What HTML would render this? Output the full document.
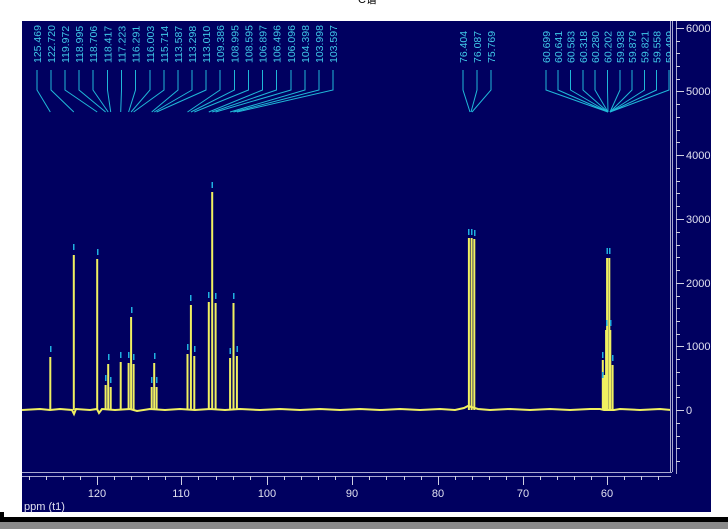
<!DOCTYPE html>
<html><head><meta charset="utf-8"><style>
html,body{margin:0;padding:0;background:#fff;width:728px;height:529px;overflow:hidden}
svg{display:block}
text{font-family:"Liberation Sans","Noto Sans CJK SC",sans-serif}
</style></head><body>
<svg width="728" height="529" viewBox="0 0 728 529" xmlns="http://www.w3.org/2000/svg">
<defs><clipPath id="c"><rect x="22" y="21" width="648" height="100"/></clipPath></defs>
<rect width="728" height="529" fill="#fff"/>
<text x="358" y="3" font-size="11" fill="#000">C谱</text>
<rect x="22" y="21" width="689" height="491" fill="#000060"/>
<rect x="0" y="517" width="728" height="5" fill="#000"/>
<rect x="0" y="522" width="728" height="7" fill="#8a8a8a"/>
<rect x="0" y="512" width="4" height="10" fill="#000"/>
<g stroke="#a8a8d0" fill="none" stroke-width="1">
<line x1="22" y1="472.5" x2="672" y2="472.5"/>
<line x1="676.5" y1="21" x2="676.5" y2="474"/>
<line x1="22" y1="476.5" x2="671" y2="476.5"/>
</g>
<g stroke="#d0d0e0" stroke-width="1">
<line x1="676" y1="28.5" x2="684" y2="28.5"/><line x1="676" y1="91.5" x2="684" y2="91.5"/>
<line x1="676" y1="155.5" x2="684" y2="155.5"/><line x1="676" y1="219.5" x2="684" y2="219.5"/>
<line x1="676" y1="283.5" x2="684" y2="283.5"/><line x1="676" y1="346.5" x2="684" y2="346.5"/>
<line x1="676" y1="410.5" x2="684" y2="410.5"/>
<line x1="676" y1="41.5" x2="680" y2="41.5"/><line x1="676" y1="53.5" x2="680" y2="53.5"/><line x1="676" y1="66.5" x2="680" y2="66.5"/><line x1="676" y1="79.5" x2="680" y2="79.5"/>
<line x1="676" y1="104.5" x2="680" y2="104.5"/><line x1="676" y1="117.5" x2="680" y2="117.5"/><line x1="676" y1="130.5" x2="680" y2="130.5"/><line x1="676" y1="142.5" x2="680" y2="142.5"/>
<line x1="676" y1="168.5" x2="680" y2="168.5"/><line x1="676" y1="181.5" x2="680" y2="181.5"/><line x1="676" y1="193.5" x2="680" y2="193.5"/><line x1="676" y1="206.5" x2="680" y2="206.5"/>
<line x1="676" y1="232.5" x2="680" y2="232.5"/><line x1="676" y1="245.5" x2="680" y2="245.5"/><line x1="676" y1="257.5" x2="680" y2="257.5"/><line x1="676" y1="270.5" x2="680" y2="270.5"/>
<line x1="676" y1="296.5" x2="680" y2="296.5"/><line x1="676" y1="308.5" x2="680" y2="308.5"/><line x1="676" y1="321.5" x2="680" y2="321.5"/><line x1="676" y1="334.5" x2="680" y2="334.5"/>
<line x1="676" y1="359.5" x2="680" y2="359.5"/><line x1="676" y1="372.5" x2="680" y2="372.5"/><line x1="676" y1="385.5" x2="680" y2="385.5"/><line x1="676" y1="397.5" x2="680" y2="397.5"/>
<line x1="676" y1="423.5" x2="680" y2="423.5"/><line x1="676" y1="436.5" x2="680" y2="436.5"/><line x1="676" y1="448.5" x2="680" y2="448.5"/><line x1="676" y1="461.5" x2="680" y2="461.5"/>
</g>
<g fill="#e0e0f0" font-size="11">
<text x="686" y="32">6000</text><text x="686" y="95">5000</text><text x="686" y="159">4000</text>
<text x="686" y="223">3000</text><text x="686" y="287">2000</text><text x="686" y="350">1000</text>
<text x="686" y="414">0</text>
</g>
<g stroke="#d0d0e0" stroke-width="1">
<line x1="97.5" y1="476" x2="97.5" y2="485"/><line x1="181.5" y1="476" x2="181.5" y2="485"/><line x1="267.5" y1="476" x2="267.5" y2="485"/><line x1="352.5" y1="476" x2="352.5" y2="485"/><line x1="438.5" y1="476" x2="438.5" y2="485"/><line x1="523.5" y1="476" x2="523.5" y2="485"/><line x1="607.5" y1="476" x2="607.5" y2="485"/>
<line x1="29.5" y1="476" x2="29.5" y2="480"/><line x1="46.5" y1="476" x2="46.5" y2="480"/><line x1="63.5" y1="476" x2="63.5" y2="480"/><line x1="80.5" y1="476" x2="80.5" y2="480"/>
<line x1="114.5" y1="476" x2="114.5" y2="480"/><line x1="131.5" y1="476" x2="131.5" y2="480"/><line x1="148.5" y1="476" x2="148.5" y2="480"/><line x1="165.5" y1="476" x2="165.5" y2="480"/>
<line x1="198.5" y1="476" x2="198.5" y2="480"/><line x1="216.5" y1="476" x2="216.5" y2="480"/><line x1="233.5" y1="476" x2="233.5" y2="480"/><line x1="250.5" y1="476" x2="250.5" y2="480"/>
<line x1="284.5" y1="476" x2="284.5" y2="480"/><line x1="301.5" y1="476" x2="301.5" y2="480"/><line x1="318.5" y1="476" x2="318.5" y2="480"/><line x1="335.5" y1="476" x2="335.5" y2="480"/>
<line x1="369.5" y1="476" x2="369.5" y2="480"/><line x1="386.5" y1="476" x2="386.5" y2="480"/><line x1="404.5" y1="476" x2="404.5" y2="480"/><line x1="421.5" y1="476" x2="421.5" y2="480"/>
<line x1="455.5" y1="476" x2="455.5" y2="480"/><line x1="472.5" y1="476" x2="472.5" y2="480"/><line x1="489.5" y1="476" x2="489.5" y2="480"/><line x1="506.5" y1="476" x2="506.5" y2="480"/>
<line x1="540.5" y1="476" x2="540.5" y2="480"/><line x1="557.5" y1="476" x2="557.5" y2="480"/><line x1="574.5" y1="476" x2="574.5" y2="480"/><line x1="591.5" y1="476" x2="591.5" y2="480"/>
<line x1="624.5" y1="476" x2="624.5" y2="480"/><line x1="641.5" y1="476" x2="641.5" y2="480"/><line x1="658.5" y1="476" x2="658.5" y2="480"/>
</g>
<g fill="#e0e0f0" font-size="11" text-anchor="middle">
<text x="97" y="497">120</text><text x="181" y="497">110</text><text x="267" y="497">100</text><text x="352" y="497">90</text><text x="438" y="497">80</text><text x="523" y="497">70</text><text x="607" y="497">60</text>
</g>
<text x="24" y="510" fill="#e0e0f0" font-size="11">ppm (t1)</text>
<polyline fill="none" stroke="#f0f060" stroke-width="2" points="22,410 40,409 50,410 60,409 72,410 74,414 76,409 90,410 97,409 99,413 102,409 115,410 130,409 137,411 150,409 165,410 180,409 195,410 210,409 225,410 240,409 260,410 280,409 300,410 320,409 340,410 360,409 380,410 400,409 420,410 440,409 455,410 464,408 468,406 478,409 490,410 510,409 530,410 550,409 570,410 590,409 600,409 604,410 614,410 620,409 640,410 660,409 671,410"/>
<g stroke="#f0f060" stroke-width="2">
<line x1="50.3" y1="410" x2="50.3" y2="357"/>
<line x1="73.8" y1="410" x2="73.8" y2="255"/>
<line x1="97.2" y1="410" x2="97.2" y2="259"/>
<line x1="105.6" y1="410" x2="105.6" y2="385"/>
<line x1="108.2" y1="410" x2="108.2" y2="364"/>
<line x1="110.7" y1="410" x2="110.7" y2="387"/>
<line x1="120.7" y1="410" x2="120.7" y2="362"/>
<line x1="128.6" y1="410" x2="128.6" y2="363"/>
<line x1="131.1" y1="410" x2="131.1" y2="317"/>
<line x1="133.6" y1="410" x2="133.6" y2="364"/>
<line x1="151.7" y1="410" x2="151.7" y2="387"/>
<line x1="154.2" y1="410" x2="154.2" y2="363"/>
<line x1="156.6" y1="410" x2="156.6" y2="387"/>
<line x1="187.5" y1="410" x2="187.5" y2="354"/>
<line x1="190.9" y1="410" x2="190.9" y2="305"/>
<line x1="194.3" y1="410" x2="194.3" y2="356"/>
<line x1="208.8" y1="410" x2="208.8" y2="302"/>
<line x1="212.2" y1="410" x2="212.2" y2="192"/>
<line x1="215.6" y1="410" x2="215.6" y2="303"/>
<line x1="230.1" y1="410" x2="230.1" y2="358"/>
<line x1="233.5" y1="410" x2="233.5" y2="303"/>
<line x1="236.9" y1="410" x2="236.9" y2="356"/>
<line x1="468.9" y1="410" x2="468.9" y2="238"/>
<line x1="471.6" y1="410" x2="471.6" y2="238"/>
<line x1="474.3" y1="410" x2="474.3" y2="239"/>
<line x1="602.8" y1="410" x2="602.8" y2="360"/>
<line x1="604.5" y1="410" x2="604.5" y2="375"/>
<line x1="606.1" y1="410" x2="606.1" y2="330"/>
<line x1="607.1" y1="410" x2="607.1" y2="258"/>
<line x1="609.3" y1="410" x2="609.3" y2="258"/>
<line x1="610.3" y1="410" x2="610.3" y2="330"/>
<line x1="612.6" y1="410" x2="612.6" y2="365"/>
</g>
<g fill="#20b0e0">
<rect x="50" y="346" width="1.5" height="6"/><rect x="73" y="244" width="1.5" height="6"/><rect x="97" y="249" width="1.5" height="6"/>
<rect x="105" y="375" width="1.5" height="6"/><rect x="108" y="354" width="1.5" height="6"/><rect x="110" y="377" width="1.5" height="6"/>
<rect x="120" y="352" width="1.5" height="6"/><rect x="128" y="352" width="1.5" height="6"/><rect x="131" y="307" width="1.5" height="6"/><rect x="133" y="354" width="1.5" height="6"/>
<rect x="151" y="377" width="1.5" height="6"/><rect x="154" y="353" width="1.5" height="6"/><rect x="156" y="377" width="1.5" height="6"/>
<rect x="187" y="344" width="1.5" height="6"/><rect x="190" y="295" width="1.5" height="6"/><rect x="194" y="346" width="1.5" height="6"/>
<rect x="208" y="292" width="1.5" height="6"/><rect x="211.5" y="182" width="1.5" height="6"/><rect x="215" y="293" width="1.5" height="6"/>
<rect x="229.5" y="348" width="1.5" height="6"/><rect x="233" y="293" width="1.5" height="6"/><rect x="236.5" y="346" width="1.5" height="6"/>
<rect x="468" y="229" width="1.5" height="6"/><rect x="471" y="229" width="1.5" height="6"/><rect x="474" y="230" width="1.5" height="6"/>
<rect x="602" y="352" width="1.5" height="6"/><rect x="602" y="372" width="1.5" height="6"/><rect x="606" y="320" width="1.5" height="6"/><rect x="606.5" y="248" width="1.5" height="6"/><rect x="609" y="248" width="1.5" height="6"/><rect x="610" y="320" width="1.5" height="6"/><rect x="612" y="355" width="1.5" height="6"/>
</g>
<g stroke="#20b8d8" fill="none" stroke-width="1" clip-path="url(#c)">
<polyline points="37,70 37,90 50.3,112"/><polyline points="51,70 51,90 73.8,112"/><polyline points="65,70 65,90 97.2,112"/>
<polyline points="79,70 79,90 105.6,112"/><polyline points="93,70 93,90 108.2,112"/><polyline points="107.5,70 107.5,90 110.7,112"/>
<polyline points="121.5,70 121.5,90 120.7,112"/><polyline points="135.5,70 135.5,90 128.6,112"/><polyline points="150,70 150,90 131.1,112"/>
<polyline points="164,70 164,90 133.6,112"/><polyline points="178,70 178,90 151.7,112"/><polyline points="192,70 192,90 154.2,112"/>
<polyline points="206,70 206,90 156.6,112"/><polyline points="220,70 220,90 187.5,112"/><polyline points="234.5,70 234.5,90 190.9,112"/>
<polyline points="248.5,70 248.5,90 194.3,112"/><polyline points="262.5,70 262.5,90 208.8,112"/><polyline points="276.5,70 276.5,90 212.2,112"/>
<polyline points="291,70 291,90 215.6,112"/><polyline points="305,70 305,90 230.1,112"/><polyline points="319,70 319,90 233.5,112"/>
<polyline points="333,70 333,90 236.9,112"/>
<polyline points="463,70 463,90 470,112"/><polyline points="477,70 477,90 471,112"/><polyline points="491,70 491,90 472,112"/>
<polyline points="546,70 546,90 608,112"/><polyline points="558,70 558,90 608,112"/><polyline points="570.5,70 570.5,90 608,112"/>
<polyline points="583,70 583,90 608,112"/><polyline points="595,70 595,90 608,112"/><polyline points="607.5,70 607.5,90 608,112"/>
<polyline points="620,70 620,90 610,112"/><polyline points="632,70 632,90 610,112"/><polyline points="644.5,70 644.5,90 610,112"/>
<polyline points="656.5,70 656.5,90 610,112"/><polyline points="669,70 669,90 610,112"/>
</g>
<g fill="#40c8e8" font-size="10.5" clip-path="url(#c)">
<text transform="translate(41,63) rotate(-90)">125.469</text>
<text transform="translate(55,63) rotate(-90)">122.720</text>
<text transform="translate(69,63) rotate(-90)">119.972</text>
<text transform="translate(83,63) rotate(-90)">118.995</text>
<text transform="translate(97,63) rotate(-90)">118.706</text>
<text transform="translate(111.5,63) rotate(-90)">118.417</text>
<text transform="translate(125.5,63) rotate(-90)">117.223</text>
<text transform="translate(139.5,63) rotate(-90)">116.291</text>
<text transform="translate(154,63) rotate(-90)">116.003</text>
<text transform="translate(168,63) rotate(-90)">115.714</text>
<text transform="translate(182,63) rotate(-90)">113.587</text>
<text transform="translate(196,63) rotate(-90)">113.298</text>
<text transform="translate(210,63) rotate(-90)">113.010</text>
<text transform="translate(224,63) rotate(-90)">109.386</text>
<text transform="translate(238.5,63) rotate(-90)">108.995</text>
<text transform="translate(252.5,63) rotate(-90)">108.595</text>
<text transform="translate(266.5,63) rotate(-90)">106.897</text>
<text transform="translate(280.5,63) rotate(-90)">106.496</text>
<text transform="translate(295,63) rotate(-90)">106.096</text>
<text transform="translate(309,63) rotate(-90)">104.398</text>
<text transform="translate(323,63) rotate(-90)">103.998</text>
<text transform="translate(337,63) rotate(-90)">103.597</text>
<text transform="translate(467,63) rotate(-90)">76.404</text>
<text transform="translate(481,63) rotate(-90)">76.087</text>
<text transform="translate(495,63) rotate(-90)">75.769</text>
<text transform="translate(550,63) rotate(-90)">60.699</text>
<text transform="translate(562,63) rotate(-90)">60.641</text>
<text transform="translate(574.5,63) rotate(-90)">60.583</text>
<text transform="translate(587,63) rotate(-90)">60.318</text>
<text transform="translate(599,63) rotate(-90)">60.280</text>
<text transform="translate(611.5,63) rotate(-90)">60.202</text>
<text transform="translate(624,63) rotate(-90)">59.938</text>
<text transform="translate(636,63) rotate(-90)">59.879</text>
<text transform="translate(648.5,63) rotate(-90)">59.821</text>
<text transform="translate(660.5,63) rotate(-90)">59.558</text>
<text transform="translate(673,63) rotate(-90)">59.499</text>
</g>
<line x1="670.5" y1="21" x2="670.5" y2="472" stroke="#a8a8d0"/>
<line x1="672.5" y1="21" x2="672.5" y2="472" stroke="#a8a8d0"/>
</svg>
</body></html>
